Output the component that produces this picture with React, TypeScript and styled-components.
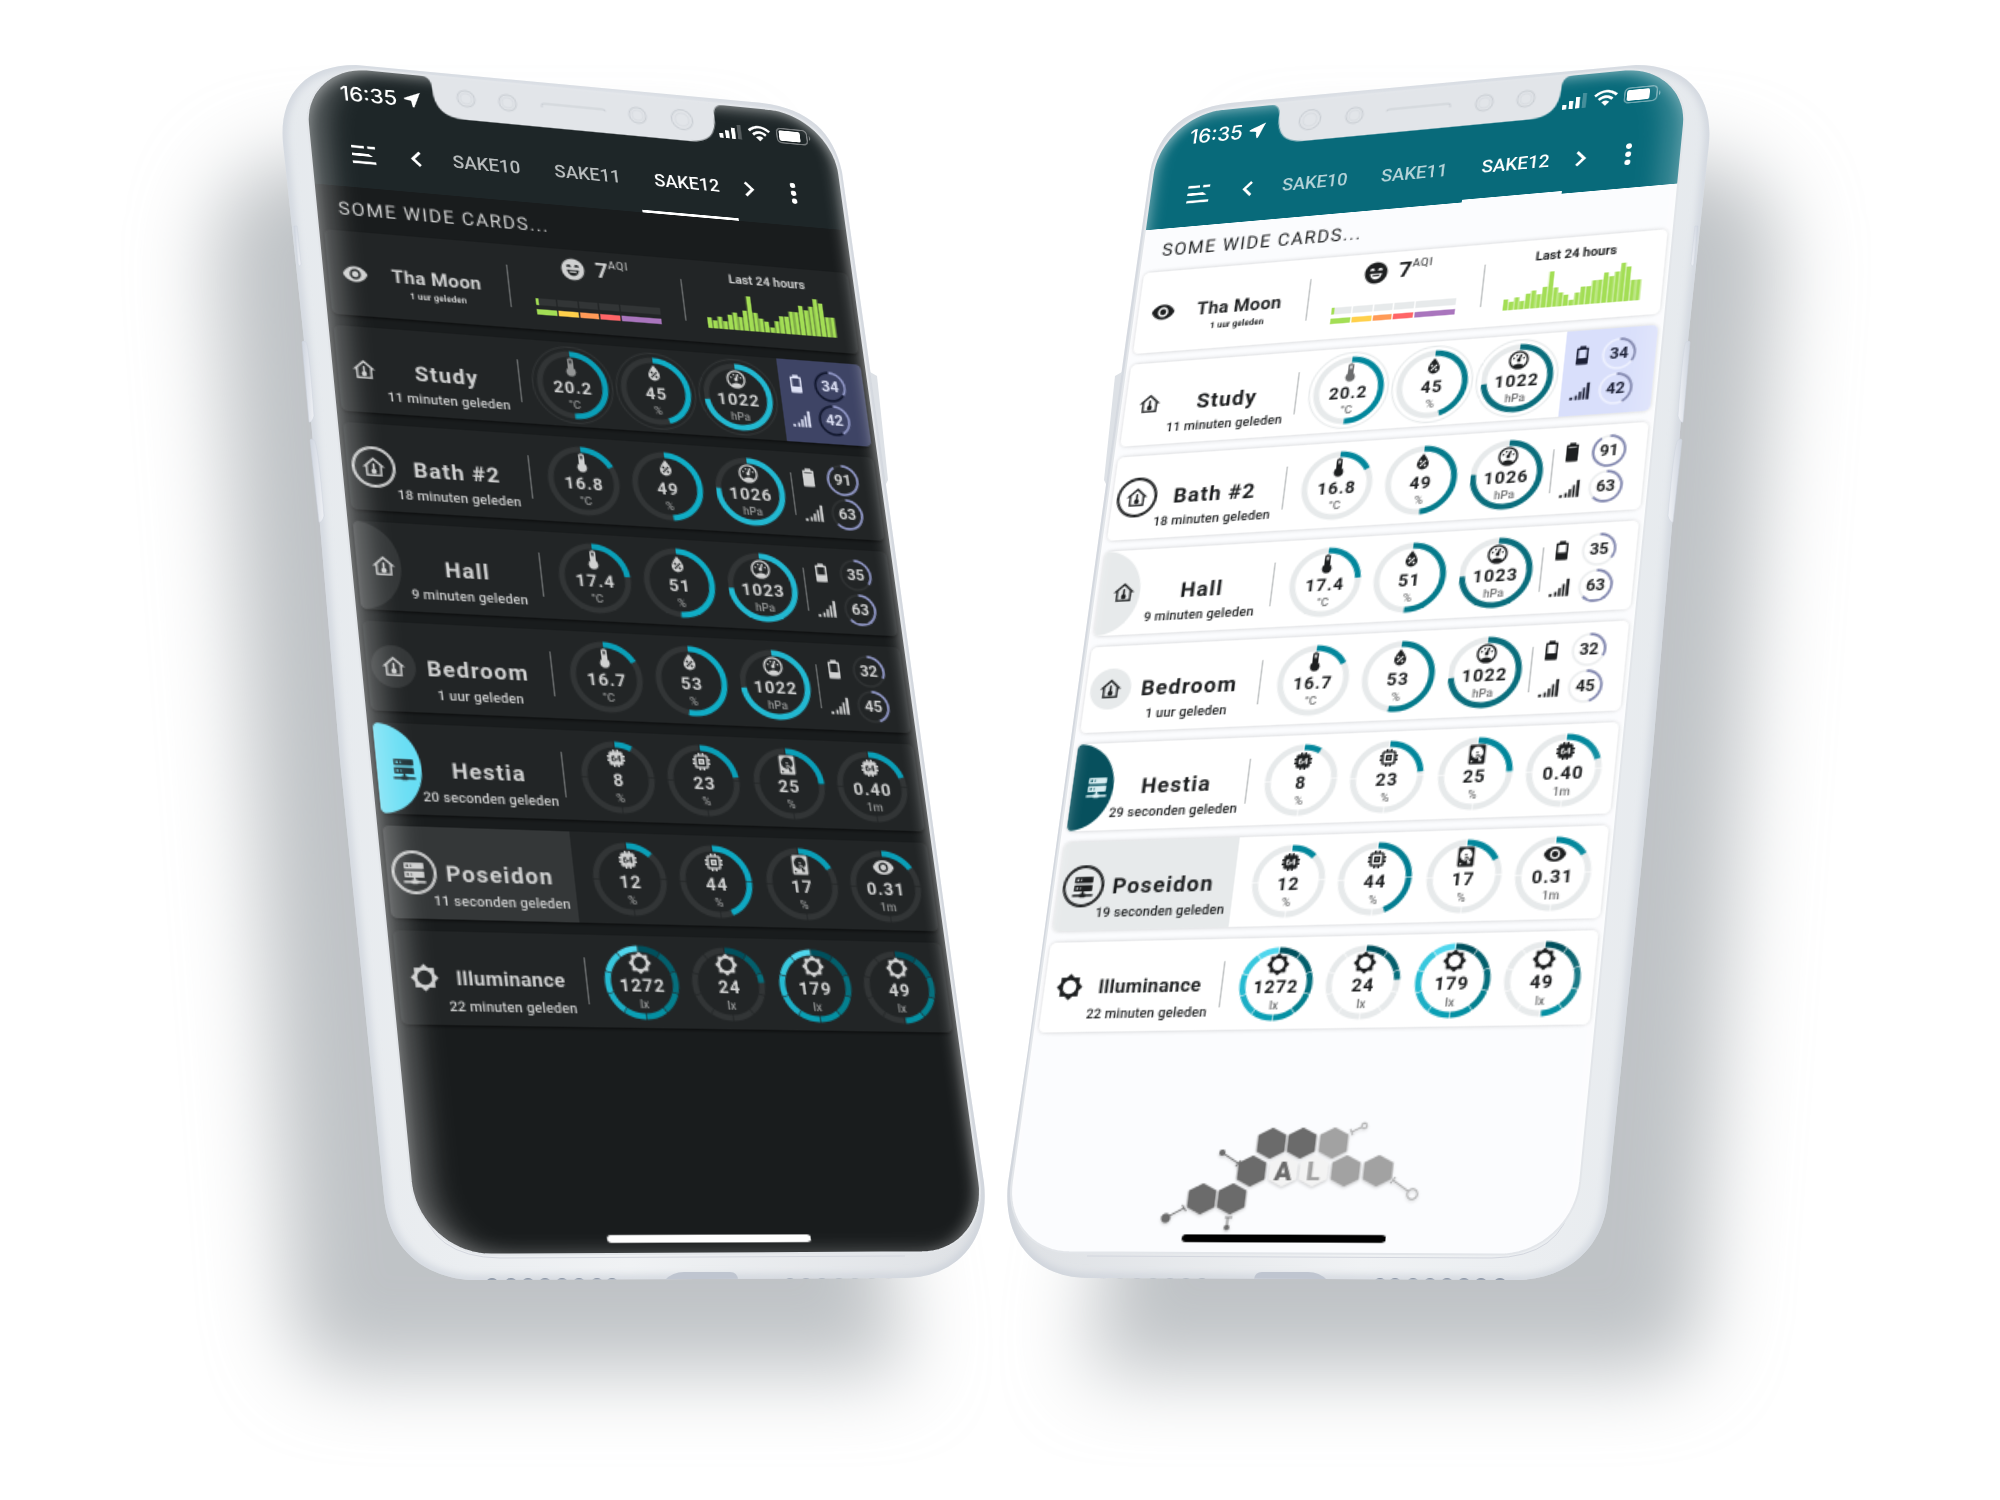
import React from 'react';
import styled, { createGlobalStyle, css, ThemeProvider } from 'styled-components';

/* ---------- themes ---------- */

interface SakeTheme {
  header: string;
  screen: string;
  card: string;
  cardShadow: string;
  text: string;
  tab: string;
  soft: string;
  divider: string;
  track: string;
  temperature: string;
  humidity: string;
  pressure: string;
  system: string;
  systemHigh: string;
  ringTrack: string;
  ringArc: string;
  asideBg: string;
  asideText: string;
  asideTrack: string;
  accent: string;
  accentIcon: string;
  homeBar: string;
  headerLine: string;
  glare: string;
}

declare module 'styled-components' {
  export interface DefaultTheme extends SakeTheme {}
}

const darkTheme: SakeTheme = {
  header: '#1e2628',
  screen: '#191c1d',
  card: '#222526',
  cardShadow: '0 1px 2px rgba(0, 0, 0, 0.6)',
  text: '#d0d1d1',
  tab: '#b9bdbe',
  soft: '#343738',
  divider: '#6a6d6e',
  track: '#323536',
  temperature: '#0a9fb8',
  humidity: '#10adc6',
  pressure: '#22b8d1',
  system: '#0a9fb8',
  systemHigh: '#0ea8c2',
  ringTrack: '#303334',
  ringArc: '#9097c6',
  asideBg: '#3e4465',
  asideText: '#dde1f5',
  asideTrack: '#10162c',
  accent: '#68def4',
  accentIcon: '#1f3338',
  homeBar: '#ffffff',
  headerLine: '#ffffff',
  glare:
    'inset 20px 0 18px -8px rgba(255, 255, 255, 0.3), inset -10px 0 10px -6px rgba(255, 255, 255, 0.3), inset 0 6px 10px -3px rgba(255, 255, 255, 0.4), inset 0 -4px 12px -2px rgba(255, 255, 255, 0.16)',
};

const lightTheme: SakeTheme = {
  header: '#086a7a',
  screen: '#fbfcfe',
  card: '#ffffff',
  cardShadow: '0 0 3px rgba(0, 0, 0, 0.2)',
  text: '#1d1f20',
  tab: '#b5d3d8',
  soft: '#e7eaeb',
  divider: '#bfc2c3',
  track: '#e7eaeb',
  temperature: '#02879c',
  humidity: '#057b8c',
  pressure: '#0a6e7d',
  system: '#02879c',
  systemHigh: '#037e92',
  ringTrack: '#eceeef',
  ringArc: '#8086ae',
  asideBg: '#d9dffb',
  asideText: '#1c2036',
  asideTrack: '#eef1ff',
  accent: '#07505d',
  accentIcon: '#d8eef2',
  homeBar: '#000000',
  headerLine: '#fbfcfe',
  glare:
    'inset -20px 0 18px -8px rgba(255, 255, 255, 0.24), inset 10px 0 10px -6px rgba(255, 255, 255, 0.28), inset 0 6px 10px -3px rgba(255, 255, 255, 0.4)',
};

/* ---------- geometry of the tilted screens ---------- */

type Point = [number, number];

const SCREEN_W = 375;
const SCREEN_H = 812;
const SCREEN_R = 46;
const SCENE_W = 996;
const SCENE_H = 1460;

/* Corners run clockwise from the top left one. */
const leftLeaning: Point[] = [
  [302, 63],
  [831, 115],
  [989, 1252],
  [418, 1255],
];

const rightLeaning: Point[] = [
  [165, 115],
  [694, 63],
  [577, 1255],
  [6, 1252],
];

/* Solves the projection of the flat screen onto the four given corners. */
const solve = ([p0, p1, p2, p3]: Point[]) => {
  const [x0, y0] = p0;
  const [x1, y1] = p1;
  const [x2, y2] = p2;
  const [x3, y3] = p3;
  const dx1 = x1 - x2;
  const dx2 = x3 - x2;
  const sx = x0 - x1 + x2 - x3;
  const dy1 = y1 - y2;
  const dy2 = y3 - y2;
  const sy = y0 - y1 + y2 - y3;
  const det = dx1 * dy2 - dx2 * dy1;
  const g = (sx * dy2 - dx2 * sy) / det;
  const h = (dx1 * sy - sx * dy1) / det;
  return {
    a: (x1 - x0 + g * x1) / SCREEN_W,
    d: (y1 - y0 + g * y1) / SCREEN_W,
    g: g / SCREEN_W,
    b: (x3 - x0 + h * x3) / SCREEN_H,
    e: (y3 - y0 + h * y3) / SCREEN_H,
    h: h / SCREEN_H,
    c: x0,
    f: y0,
  };
};

const project = (corners: Point[]): string => {
  const { a, b, c, d, e, f, g, h } = solve(corners);
  const m = [a, d, 0, g, b, e, 0, h, 0, 0, 1, 0, c, f, 0, 1];
  return `matrix3d(${m.map((n) => n.toFixed(9)).join(',')})`;
};

/* Outline of the glass, rounded corners included, after projection. */
const outline = (corners: Point[]): string => {
  const { a, b, c, d, e, f, g, h } = solve(corners);
  const centres: [number, number, number][] = [
    [SCREEN_R, SCREEN_R, 180],
    [SCREEN_W - SCREEN_R, SCREEN_R, 270],
    [SCREEN_W - SCREEN_R, SCREEN_H - SCREEN_R, 0],
    [SCREEN_R, SCREEN_H - SCREEN_R, 90],
  ];
  const points: string[] = [];
  centres.forEach(([cx, cy, from]) => {
    for (let s = 0; s <= 18; s += 1) {
      const t = ((from + s * 5) * Math.PI) / 180;
      const x = cx + SCREEN_R * Math.cos(t);
      const y = cy + SCREEN_R * Math.sin(t);
      const w = g * x + h * y + 1;
      points.push(`${((a * x + b * y + c) / w).toFixed(2)} ${((d * x + e * y + f) / w).toFixed(2)}`);
    }
  });
  return `M${points.join('L')}Z`;
};

/* ---------- icons ---------- */

const paths = {
  eye: 'M12 9a3 3 0 1 0 0 6 3 3 0 0 0 0-6m0 8a5 5 0 1 1 0-10 5 5 0 0 1 0 10m0-12.500C7 4.500 2.730 7.610 1 12c1.730 4.390 6 7.500 11 7.500s9.270-3.110 11-7.500c-1.730-4.390-6-7.500-11-7.500Z',
  thermometer: 'M15 13V5A3 3 0 0 0 9 5V13A5 5 0 1 0 15 13M12 4A1 1 0 0 1 13 5V8H11V5A1 1 0 0 1 12 4Z',
  water:
    'M12,3.25C12,3.25 6,10 6,14C6,17.32 8.69,20 12,20A6,6 0 0,0 18,14C18,10 12,3.25 12,3.25M14.47,9.97L15.53,11.03L9.53,17.03L8.47,15.97M9.75,10A1.25,1.25 0 0,1 11,11.25A1.25,1.25 0 0,1 9.75,12.5A1.25,1.25 0 0,1 8.5,11.25A1.25,1.25 0 0,1 9.75,10M14.25,14.5A1.25,1.25 0 0,1 15.5,15.75A1.25,1.25 0 0,1 14.25,17A1.25,1.25 0 0,1 13,15.75A1.25,1.25 0 0,1 14.25,14.5Z',
  gauge:
    'M12,2A10,10 0 0,0 2,12A10,10 0 0,0 12,22A10,10 0 0,0 22,12A10,10 0 0,0 12,2M12,4A8,8 0 0,1 20,12C20,14.4 19,16.5 17.3,18C15.9,16.7 14,16 12,16C10,16 8.2,16.7 6.7,18C5,16.5 4,14.4 4,12A8,8 0 0,1 12,4M14,5.89C13.62,5.9 13.26,6.15 13.1,6.54L11.81,9.77L11.71,10C11,10.13 10.41,10.6 10.14,11.26C9.73,12.29 10.23,13.45 11.26,13.86C12.29,14.27 13.45,13.77 13.86,12.74C14.12,12.08 14,11.32 13.57,10.76L13.67,10.5L14.96,7.29L14.97,7.26C15.17,6.75 14.92,6.17 14.41,5.96C14.28,5.91 14.15,5.89 14,5.89M10,6A1,1 0 0,0 9,7A1,1 0 0,0 10,8A1,1 0 0,0 11,7A1,1 0 0,0 10,6M7,9A1,1 0 0,0 6,10A1,1 0 0,0 7,11A1,1 0 0,0 8,10A1,1 0 0,0 7,9M17,9A1,1 0 0,0 16,10A1,1 0 0,0 17,11A1,1 0 0,0 18,10A1,1 0 0,0 17,9Z',
  home:
    'M12 2.500L1.500 12H4.500V21H19.500V12H22.500L12 2.500M12 5.200L17.700 10.300V19.200H6.300V10.300L12 5.200M11 9.500V14A2.500 2.500 0 1 0 13 14V9.500A1 1 0 0 0 11 9.500Z',
  server:
    'M13,19H14A1,1 0 0,1 15,20H22V22H15A1,1 0 0,1 14,23H10A1,1 0 0,1 9,22H2V20H9A1,1 0 0,1 10,19H11V17H4A1,1 0 0,1 3,16V12A1,1 0 0,1 4,11H20A1,1 0 0,1 21,12V16A1,1 0 0,1 20,17H13V19M4,3H20A1,1 0 0,1 21,4V8A1,1 0 0,1 20,9H4A1,1 0 0,1 3,8V4A1,1 0 0,1 4,3M9,7H10V5H9V7M9,15H10V13H9V15M5,5V7H7V5H5M5,13V15H7V13H5Z',
  chip:
    'M9,3V5H7A2,2 0 0,0 5,7V9H3V11H5V13H3V15H5V17A2,2 0 0,0 7,19H9V21H11V19H13V21H15V19H17A2,2 0 0,0 19,17V15H21V13H19V11H21V9H19V7A2,2 0 0,0 17,5H15V3H13V5H11V3Z',
  memory:
    'M17,17H7V7H17M21,11V9H19V7C19,5.89 18.1,5 17,5H15V3H13V5H11V3H9V5H7C5.89,5 5,5.89 5,7V9H3V11H5V13H3V15H5V17A2,2 0 0,0 7,19H9V21H11V19H13V21H15V19H17A2,2 0 0,0 19,17V15H21V13H19V11M13,13H11V11H13M15,9H9V15H15V9Z',
  disk:
    'M6,2H18A2,2 0 0,1 20,4V20A2,2 0 0,1 18,22H6A2,2 0 0,1 4,20V4A2,2 0 0,1 6,2M12,4A6,6 0 0,0 6,10C6,13.31 8.69,16 12.1,16L11.22,13.77C10.95,13.29 11.11,12.68 11.59,12.4L12.45,11.9C12.93,11.63 13.54,11.79 13.82,12.27L15.74,14.69C17.12,13.59 18,11.9 18,10A6,6 0 0,0 12,4M12,9A1,1 0 0,1 13,10A1,1 0 0,1 12,11A1,1 0 0,1 11,10A1,1 0 0,1 12,9M7,18A1,1 0 0,0 6,19A1,1 0 0,0 7,20A1,1 0 0,0 8,19A1,1 0 0,0 7,18M12.09,13.27L14.58,19.58L17.17,18.08L12.95,12.77L12.09,13.27Z',
  brightness:
    'M12,18A6,6 0 0,1 6,12A6,6 0 0,1 12,6A6,6 0 0,1 18,12A6,6 0 0,1 12,18M20,15.31L23.31,12L20,8.69V4H15.31L12,0.69L8.69,4H4V8.69L0.69,12L4,15.31V20H8.69L12,23.31L15.31,20H20V15.31Z',
  smile:
    'M12,2A10,10 0 0,0 2,12A10,10 0 0,0 12,22A10,10 0 0,0 22,12A10,10 0 0,0 12,2M8.5,7.500C9.600,7.500 10.500,8.400 10.700,9.800H6.300C6.500,8.400 7.400,7.500 8.500,7.500M15.500,7.500C16.600,7.500 17.500,8.400 17.700,9.800H13.300C13.500,8.400 14.400,7.500 15.500,7.500M12,18C9.300,18 7.200,16 6.800,12.500H17.200C16.800,16 14.700,18 12,18M8.800,13.600L9.300,15H14.700L15.200,13.600H8.800Z',
  arrow: 'M22.500 1.500 1.500 10.500v2l8.700 1.400 1.400 8.600h2L22.500 1.500Z',
};

type IconName = keyof typeof paths;

const IconSvg = styled.svg<{ $size: number; $faded?: boolean }>`
  display: block;
  flex: none;
  width: ${(p) => p.$size}px;
  height: ${(p) => p.$size}px;
  fill: currentColor;
  opacity: ${(p) => (p.$faded ? 0.65 : 1)};
`;

const ChipText = styled.text`
  font: 700 9px Roboto, 'Liberation Sans', sans-serif;
  fill: ${(p) => p.theme.card};
`;

const Icon = ({ name, size, faded }: { name: IconName; size: number; faded?: boolean }) => (
  <IconSvg viewBox="0 0 24 24" $size={size} $faded={faded} aria-hidden="true">
    <path fillRule="evenodd" d={paths[name]} />
    {name === 'chip' && <ChipText x="12" y="15.300" textAnchor="middle">64</ChipText>}
  </IconSvg>
);

const Battery = ({ level }: { level: number }) => (
  <IconSvg viewBox="0 0 24 24" $size={16} aria-hidden="true">
    <path
      fillRule="evenodd"
      d={`M16.670 4H15V2H9V4H7.330A1.330 1.330 0 0 0 6 5.330V20.670C6 21.400 6.600 22 7.330 22H16.670A1.330 1.330 0 0 0 18 20.670V5.330C18 4.600 17.400 4 16.670 4ZM8 6H16V${
        6 + Math.round((1 - level / 100) * 13)
      }H8Z`}
    />
  </IconSvg>
);

const SignalBars = () => (
  <IconSvg viewBox="0 0 24 24" $size={15} aria-hidden="true">
    <path d="M2 19h3v3H2zM7.500 17h2.500v5H7.500zM11.500 13h2.500v9h-2.500zM15.500 8.500H18V22h-2.500zM19.500 3h3v19h-3z" />
  </IconSvg>
);

/* ---------- page ---------- */

const GlobalStyle = createGlobalStyle`
  *, *::before, *::after { box-sizing: border-box; }
  body {
    margin: 0;
    background: #ffffff;
    font-family: Roboto, 'Liberation Sans', sans-serif;
  }
`;

const Stage = styled.main`
  display: flex;
  justify-content: center;
  min-height: 100vh;
  padding-right: 8px;
  overflow: hidden;
`;

const Scene = styled.section`
  position: relative;
  flex: none;
  width: ${SCENE_W}px;
  height: ${SCENE_H}px;
`;

const SceneSvg = styled.svg<{ $flip?: boolean }>`
  position: absolute;
  inset: 0;
  width: 100%;
  height: 100%;
  overflow: visible;
  pointer-events: none;
  ${(p) => p.$flip && css`transform: scaleX(-1);`}
`;

const Screen = styled.div<{ $corners: Point[] }>`
  position: absolute;
  top: 0;
  left: 0;
  display: flex;
  flex-direction: column;
  width: ${SCREEN_W}px;
  height: ${SCREEN_H}px;
  border-radius: ${SCREEN_R}px;
  overflow: hidden;
  transform-origin: 0 0;
  transform: ${(p) => project(p.$corners)};
  background: ${(p) => p.theme.screen};
  color: ${(p) => p.theme.text};
`;

const Glare = styled.div`
  position: absolute;
  inset: 0;
  border-radius: ${SCREEN_R}px;
  box-shadow: ${(p) => p.theme.glare};
  pointer-events: none;
`;

const NotchSvg = styled.svg`
  position: absolute;
  top: 0;
  left: 80px;
  width: 216px;
  height: 32px;
`;

/* ---------- header ---------- */

const TopBar = styled.header`
  height: 89px;
  background: ${(p) => p.theme.header};
  color: #ffffff;
`;

const StatusBar = styled.div`
  display: flex;
  align-items: center;
  justify-content: space-between;
  height: 39px;
  padding: 0 17px 0 24px;
`;

const StatusGroup = styled.div`
  display: flex;
  align-items: center;
  gap: 4px;
`;

const Clock = styled.time`
  font: 500 15px/18px Inter, 'Liberation Sans', sans-serif;
`;

const StatusSvg = styled.svg<{ $w: number }>`
  display: block;
  width: ${(p) => p.$w}px;
  height: 12px;
`;

const Nav = styled.nav`
  display: flex;
  align-items: center;
  height: 50px;
  padding: 0 22px 0 20px;
`;

const BarButton = styled.button<{ $w: number }>`
  display: flex;
  align-items: center;
  justify-content: center;
  width: ${(p) => p.$w}px;
  height: 50px;
  padding: 0;
  border: 0;
  background: none;
  color: inherit;
`;

const Tab = styled.a<{ $active?: boolean }>`
  display: flex;
  flex: 1;
  align-items: center;
  justify-content: center;
  height: 50px;
  margin: 0 1px;
  padding-top: 1px;
  border-bottom: 2px solid ${(p) => (p.$active ? p.theme.headerLine : 'transparent')};
  color: ${(p) => (p.$active ? '#ffffff' : p.theme.tab)};
  font-size: 13px;
  font-weight: 500;
  text-decoration: none;
`;

const Spacer = styled.span`
  width: 10px;
`;

const Heading = styled.h2`
  margin: 0;
  padding-left: 15px;
  font-size: 13px;
  font-weight: 400;
  letter-spacing: 0.085em;
  line-height: 33px;
`;

/* ---------- cards ---------- */

const CardList = styled.div`
  display: flex;
  flex-direction: column;
  gap: 8px;
  padding: 0 4px;
`;

const Card = styled.article`
  position: relative;
  display: flex;
  align-items: center;
  height: 61px;
  border-radius: 4px;
  background: ${(p) => p.theme.card};
  box-shadow: ${(p) => p.theme.cardShadow};
`;

type Badge = 'none' | 'outline' | 'disc' | 'half' | 'accent';

const Info = styled.div<{ $filled?: boolean }>`
  position: relative;
  display: flex;
  align-items: center;
  width: 122px;
  height: 61px;
  border-radius: 4px 0 0 4px;
  overflow: hidden;
  background: ${(p) => (p.$filled ? p.theme.soft : 'none')};
`;

const HalfDisc = styled.span<{ $accent: boolean }>`
  position: absolute;
  top: 0;
  left: 0;
  width: 29px;
  height: 61px;
  border-radius: 0 29px 29px 0 / 0 31px 31px 0;
  background: ${(p) => (p.$accent ? p.theme.accent : p.theme.soft)};
`;

const IconSlot = styled.span`
  position: relative;
  display: flex;
  flex: none;
  justify-content: center;
  width: 35px;
`;

const IconBadge = styled.span<{ $kind: Badge }>`
  display: flex;
  flex: none;
  align-items: center;
  justify-content: center;
  width: 29px;
  height: 29px;
  border-radius: 50%;
  ${(p) => p.$kind === 'outline' && css`border: 1px solid currentColor; box-shadow: inset 0 0 0 1px currentColor;`}
  ${(p) => p.$kind === 'disc' && css`background: ${p.theme.soft};`}
  ${(p) => p.$kind === 'accent' && css`color: ${p.theme.accentIcon};`}
`;

const Names = styled.div`
  position: relative;
  display: flex;
  flex-direction: column;
  align-items: center;
  align-self: flex-start;
  width: 76px;
  padding-top: 22px;
  white-space: nowrap;
`;

const Title = styled.h3<{ $small?: boolean }>`
  margin: 0;
  font-size: ${(p) => (p.$small ? 13 : 15)}px;
  font-weight: 700;
  letter-spacing: ${(p) => (p.$small ? 0.02 : 0.06)}em;
  line-height: 18px;
`;

const Age = styled.p<{ $small?: boolean }>`
  margin: 0;
  font-size: ${(p) => (p.$small ? 6 : 9)}px;
  font-weight: ${(p) => (p.$small ? 700 : 500)};
  letter-spacing: 0.02em;
  line-height: ${(p) => (p.$small ? 8 : 19)}px;
`;

const Divider = styled.span<{ $hidden?: boolean }>`
  flex: none;
  width: 1px;
  height: 31px;
  background: ${(p) => (p.$hidden ? 'transparent' : p.theme.divider)};
`;

const Gauges = styled.div<{ $count: number }>`
  display: grid;
  flex: 1;
  grid-template-columns: repeat(${(p) => p.$count}, 1fr);
  justify-items: center;
  padding: 0 ${(p) => (p.$count === 4 ? 4 : 1)}px 0 7px;
`;

const GaugeBox = styled.div`
  position: relative;
  display: flex;
  flex-direction: column;
  align-items: center;
  width: 50px;
  height: 50px;
  padding-top: 4px;
`;

const GaugeSvg = styled.svg`
  position: absolute;
  inset: 0;
  overflow: visible;
`;

const Value = styled.strong`
  font-size: 12px;
  font-weight: 700;
  letter-spacing: 0.06em;
  line-height: 15px;
`;

const Unit = styled.span`
  font-size: 8px;
  font-weight: 500;
  line-height: 9px;
  opacity: 0.65;
`;

type GaugeKind = 'temperature' | 'humidity' | 'pressure' | 'system' | 'systemHigh' | 'light';

interface GaugeData {
  icon: IconName;
  value: string;
  unit: string;
  part: number;
  kind: GaugeKind;
}

const lightScale = [
  '#00505d', '#035f6c', '#066f7d', '#04808f', '#0490a3',
  '#0a9fb4', '#1caec5', '#25bad1', '#38c8de', '#50d7ee',
];

const arc = (from: number, to: number, r: number, c: number) => {
  const at = (t: number) => {
    const a = t * Math.PI * 2 - Math.PI / 2;
    return `${(c + r * Math.cos(a)).toFixed(3)} ${(c + r * Math.sin(a)).toFixed(3)}`;
  };
  return `M${at(from)}A${r} ${r} 0 ${to - from > 0.5 ? 1 : 0} 1 ${at(to)}`;
};

const Arc = styled.path<{ $kind: GaugeKind | 'track' }>`
  fill: none;
  stroke: ${(p) => (p.$kind === 'light' ? 'currentColor' : p.theme[p.$kind])};
  stroke-width: 4;
`;

const Halo = styled.circle`
  fill: none;
  stroke: ${(p) => p.theme.track};
  stroke-width: 1;
`;

const Gauge = ({ data, halo, faded }: { data: GaugeData; halo?: boolean; faded?: boolean }) => {
  const segments = data.kind === 'light' ? 10 : data.kind.startsWith('system') ? 4 : 1;
  const gap = segments > 1 ? 0.004 : 0;
  const list = Array.from({ length: segments }, (_, i) => i);
  return (
    <GaugeBox>
      <GaugeSvg viewBox="0 0 50 50" aria-hidden="true">
        {halo && <Halo cx="25" cy="25" r="27.500" />}
        {list.map((i) => {
          const start = i / segments;
          const end = Math.min((i + 1) / segments, 0.9999) - gap;
          const filled = Math.min(end, data.part);
          return (
            <g key={i}>
              <Arc $kind="track" d={arc(start, end, 22.5, 25)} />
              {filled > start && (
                <g color={lightScale[i]}>
                  <Arc $kind={data.kind} d={arc(start, filled, 22.5, 25)} />
                </g>
              )}
            </g>
          );
        })}
      </GaugeSvg>
      <Icon name={data.icon} size={16} faded={faded} />
      <Value>{data.value}</Value>
      <Unit>{data.unit}</Unit>
    </GaugeBox>
  );
};

const Aside = styled.div<{ $filled?: boolean }>`
  display: grid;
  flex: none;
  grid-template-columns: 24px 25px;
  align-content: center;
  row-gap: 2px;
  width: 61px;
  height: 61px;
  border-radius: 0 4px 4px 0;
  ${(p) => p.$filled && css`background: ${p.theme.asideBg}; color: ${p.theme.asideText};`}
`;

const AsideIcon = styled.span`
  display: flex;
  align-items: center;
  justify-content: center;
`;

const RingBox = styled.div`
  position: relative;
  display: flex;
  align-items: center;
  justify-content: center;
  width: 23px;
  height: 23px;
  justify-self: center;
  font-size: 11px;
  font-weight: 700;
`;

const RingSvg = styled.svg`
  position: absolute;
  inset: 0;
`;

const RingTrack = styled.circle<{ $strong?: boolean }>`
  fill: none;
  stroke: ${(p) => (p.$strong ? p.theme.asideTrack : p.theme.ringTrack)};
  stroke-width: 1.5;
`;

const RingArc = styled.path`
  fill: none;
  stroke: ${(p) => p.theme.ringArc};
  stroke-width: 1.7;
`;

const Ring = ({ value, strong }: { value: number; strong?: boolean }) => (
  <RingBox>
    <RingSvg viewBox="0 0 23 23" aria-hidden="true">
      <RingTrack cx="11.500" cy="11.500" r="10.500" $strong={strong} />
      <RingArc d={arc(0, value / 100, 10.5, 11.5)} />
    </RingSvg>
    {value}
  </RingBox>
);

interface Row {
  title: string;
  age: string;
  icon: IconName;
  badge: Badge;
  gauges: GaugeData[];
  battery?: number;
  signal?: number;
  filled?: boolean;
  highlight?: boolean;
}

const climate = (t: string, tp: number, h: number, p: string, pp: number): GaugeData[] => [
  { icon: 'thermometer', value: t, unit: '°C', part: tp, kind: 'temperature' },
  { icon: 'water', value: String(h), unit: '%', part: h / 100, kind: 'humidity' },
  { icon: 'gauge', value: p, unit: 'hPa', part: pp, kind: 'pressure' },
];

const makeRows = (hestiaAge: string, poseidonAge: string): Row[] => [
  { title: 'Study', age: '11 minuten geleden', icon: 'home', badge: 'none', gauges: climate('20.2', 0.505, 45, '1022', 0.73), battery: 34, signal: 42, highlight: true },
  { title: 'Bath #2', age: '18 minuten geleden', icon: 'home', badge: 'outline', gauges: climate('16.8', 0.17, 49, '1026', 0.76), battery: 91, signal: 63 },
  { title: 'Hall', age: '9 minuten geleden', icon: 'home', badge: 'half', gauges: climate('17.4', 0.235, 51, '1023', 0.74), battery: 35, signal: 63 },
  { title: 'Bedroom', age: '1 uur geleden', icon: 'home', badge: 'disc', gauges: climate('16.7', 0.168, 53, '1022', 0.73), battery: 32, signal: 45 },
  {
    title: 'Hestia', age: hestiaAge, icon: 'server', badge: 'accent',
    gauges: [
      { icon: 'chip', value: '8', unit: '%', part: 0.08, kind: 'system' },
      { icon: 'memory', value: '23', unit: '%', part: 0.23, kind: 'system' },
      { icon: 'disk', value: '25', unit: '%', part: 0.25, kind: 'system' },
      { icon: 'chip', value: '0.40', unit: '1m', part: 0.2, kind: 'system' },
    ],
  },
  {
    title: 'Poseidon', age: poseidonAge, icon: 'server', badge: 'outline', filled: true,
    gauges: [
      { icon: 'chip', value: '12', unit: '%', part: 0.12, kind: 'system' },
      { icon: 'memory', value: '44', unit: '%', part: 0.44, kind: 'systemHigh' },
      { icon: 'disk', value: '17', unit: '%', part: 0.17, kind: 'system' },
      { icon: 'eye', value: '0.31', unit: '1m', part: 0.155, kind: 'system' },
    ],
  },
  {
    title: 'Illuminance', age: '22 minuten geleden', icon: 'brightness', badge: 'none',
    gauges: [
      { icon: 'brightness', value: '1272', unit: 'lx', part: 1, kind: 'light' },
      { icon: 'brightness', value: '24', unit: 'lx', part: 0.24, kind: 'light' },
      { icon: 'brightness', value: '179', unit: 'lx', part: 1, kind: 'light' },
      { icon: 'brightness', value: '49', unit: 'lx', part: 0.49, kind: 'light' },
    ],
  },
];

const EntityCard = ({ row }: { row: Row }) => (
  <Card>
    <Info $filled={row.filled}>
      {(row.badge === 'half' || row.badge === 'accent') && <HalfDisc $accent={row.badge === 'accent'} />}
      <IconSlot>
        <IconBadge $kind={row.badge}>
          <Icon name={row.icon} size={row.icon === 'brightness' ? 19 : 17} />
        </IconBadge>
      </IconSlot>
      <Names>
        <Title $small={row.icon === 'brightness'}>{row.title}</Title>
        <Age>{row.age}</Age>
      </Names>
    </Info>
    <Divider $hidden={row.filled} />
    <Gauges $count={row.gauges.length}>
      {row.gauges.map((g, i) => (
        <Gauge key={i} data={g} halo={row.highlight} faded={row.highlight && i === 0} />
      ))}
    </Gauges>
    {row.battery !== undefined && row.signal !== undefined && (
      <>
        <Divider $hidden={row.highlight} />
        <Aside $filled={row.highlight}>
          <AsideIcon><Battery level={row.battery} /></AsideIcon>
          <Ring value={row.battery} strong={row.highlight} />
          <AsideIcon><SignalBars /></AsideIcon>
          <Ring value={row.signal} strong={row.highlight} />
        </Aside>
      </>
    )}
  </Card>
);

/* ---------- air quality card ---------- */

const AirBlock = styled.div`
  display: flex;
  flex-direction: column;
  align-items: center;
  align-self: flex-start;
  width: 121px;
  padding-top: 4px;
`;

const AirHead = styled.div`
  display: flex;
  align-items: center;
  gap: 6px;
  height: 20px;
  margin-bottom: 14px;
`;

const AirValue = styled.strong`
  display: flex;
  align-items: flex-start;
  font-size: 16px;
  font-weight: 700;
  line-height: 22px;
`;

const AirUnit = styled.sup`
  font-size: 8px;
  font-weight: 400;
  line-height: 14px;
  letter-spacing: 0.06em;
`;

const AirBar = styled.div<{ $thick?: boolean }>`
  display: grid;
  grid-template-columns: 1fr 1fr 1fr 1fr 2fr;
  gap: 1px;
  width: 87px;
  height: ${(p) => (p.$thick ? 5 : 4)}px;
  margin-bottom: 3px;
`;

const AirSegment = styled.span<{ $color?: string; $start?: boolean }>`
  background: ${(p) => p.$color ?? p.theme.track};
  ${(p) => p.$start && css`border-left: 2px solid #a3de55;`}
`;

const HistoryBlock = styled.div`
  display: flex;
  flex: 1;
  flex-direction: column;
  align-items: center;
  align-self: flex-start;
  padding: 6px 0 0 1px;
  font-size: 9px;
  font-weight: 700;
  line-height: 12px;
`;

const Chart = styled.svg`
  display: block;
  width: 93px;
  height: 28px;
  margin-top: 4px;
  fill: #a3de55;
`;

const history = [8, 6, 9, 6, 11, 13, 10, 15, 26, 14, 10, 8, 4, 9, 13, 13, 17, 17, 22, 19, 22, 28, 25, 15, 15];
const airColors = ['#a3de55', '#ffd04b', '#ff9a57', '#ff6567', '#a975bd'];

const MoonCard = () => (
  <Card>
    <Info>
      <IconSlot>
        <Icon name="eye" size={18} />
      </IconSlot>
      <Names>
        <Title $small>Tha Moon</Title>
        <Age $small>1 uur geleden</Age>
      </Names>
    </Info>
    <Divider />
    <AirBlock>
      <AirHead>
        <Icon name="smile" size={19} />
        <AirValue>7<AirUnit>AQI</AirUnit></AirValue>
      </AirHead>
      <AirBar $thick>
        {airColors.map((c, i) => <AirSegment key={c} $start={i === 0} />)}
      </AirBar>
      <AirBar>
        {airColors.map((c) => <AirSegment key={c} $color={c} />)}
      </AirBar>
    </AirBlock>
    <Divider />
    <HistoryBlock>
      Last 24 hours
      <Chart viewBox="0 0 100 28" preserveAspectRatio="none" aria-hidden="true">
        {history.map((h, i) => <rect key={i} x={i * 4} y={28 - h} width="3.450" height={h} />)}
      </Chart>
    </HistoryBlock>
  </Card>
);

/* ---------- logo ---------- */

const LogoSvg = styled.svg`
  display: block;
  width: 180px;
  height: 84px;
  margin: 50px 0 0 100px;
  overflow: visible;
  filter: drop-shadow(0 1px 1px rgba(0, 0, 0, 0.2));
`;

const LogoLetter = styled.text`
  font: 900 17px Roboto, 'Liberation Sans', sans-serif;
  text-anchor: middle;
`;

const hexes: [number, number, string][] = [
  [73, 25, '#6b6b6b'], [93, 25, '#6b6b6b'], [114, 25, '#a2a2a2'],
  [62, 43, '#6b6b6b'], [83, 43, '#f3f3f3'], [103, 43, '#f3f3f3'], [124, 43, '#a2a2a2'], [145, 43, '#a2a2a2'],
  [31, 61, '#6b6b6b'], [51, 61, '#6b6b6b'],
];

const Logo = () => (
  <LogoSvg viewBox="0 0 180 84" role="img" aria-label="AL">
    {hexes.map(([x, y, c]) => (
      <path
        key={`${x}-${y}`}
        d={`M${x} ${y - 9.5}L${x + 8.8} ${y - 5}V${y + 5}L${x} ${y + 9.5}L${x - 8.8} ${y + 5}V${y - 5}Z`}
        fill={c}
        stroke={c}
        strokeLinejoin="round"
      />
    ))}
    <LogoLetter x="83" y="49" fill="#6b6b6b">A</LogoLetter>
    <LogoLetter x="103" y="49" fill="#a2a2a2">L</LogoLetter>
    <g stroke="#6b6b6b" fill="#6b6b6b">
      <path d="M51 40l3-4M52.500 38L41 31M18.500 65l3 4M20 67L9 73M48 73h5M50 73v6" fill="none" strokeWidth="0.800" />
      <circle cx="41" cy="31" r="1.500" />
      <circle cx="8.500" cy="73.500" r="2.600" />
      <circle cx="50" cy="79.500" r="1.300" />
    </g>
    <g stroke="#a2a2a2" fill="none" strokeWidth="0.800">
      <path d="M124 16l2 4M125 18l6-3M154 51l3-4M155.500 49L166 56" />
      <circle cx="133" cy="14" r="1.800" />
      <circle cx="169" cy="58" r="3.300" />
    </g>
  </LogoSvg>
);

const HomeBar = styled.span`
  width: 134px;
  height: 5px;
  margin: auto auto 7px;
  border-radius: 3px;
  background: ${(p) => p.theme.homeBar};
`;

/* ---------- device ---------- */

const speakerHoles = [492, 511, 528, 545, 562, 579, 597, 612, 790, 806, 822, 839, 855, 872, 889, 905];

const bodyPath =
  'M283 143C279 98 302 65 356 65L752 102C806 106 833 130 842 172L866 340L964 1050L984 1183C990 1240 958 1277 905 1278L472 1280C424 1278 388 1248 384 1197L340 760L305 350Z';

const Device = ({ id, flip }: { id: string; flip: boolean }) => (
  <SceneSvg viewBox={`0 0 ${SCENE_W} ${SCENE_H}`} $flip={flip} aria-hidden="true">
    <defs>
      <linearGradient id={`${id}-body`} x1="0" y1="0" x2="1" y2="0">
        <stop offset="0" stopColor="#e5e9ed" />
        <stop offset="0.5" stopColor="#f0f2f4" />
        <stop offset="1" stopColor="#dde0e4" />
      </linearGradient>
      <linearGradient id={`${id}-button`} x1="0" y1="0" x2="1" y2="0">
        <stop offset="0" stopColor="#cfd5df" />
        <stop offset="1" stopColor="#eff1f5" />
      </linearGradient>
      <filter id={`${id}-shade`} x="-40%" y="-40%" width="180%" height="180%">
        <feGaussianBlur stdDeviation="40" />
      </filter>
      <filter id={`${id}-soft`} x="-10%" y="-10%" width="120%" height="120%">
        <feGaussianBlur stdDeviation="4" />
      </filter>
      <clipPath id={`${id}-clip`}>
        <path d={bodyPath} />
      </clipPath>
    </defs>
    <path
      d="M300 160H720L905 1372H345Q300 1370 292 1320L214 260Q214 165 300 160Z"
      fill="#bfc3c6"
      filter={`url(#${id}-shade)`}
    />
    <path d="M870 372l7 4 11 104-4 8z" fill="#dde1e6" />
    <g clipPath={`url(#${id}-clip)`}>
      <rect x="260" y="40" width="740" height="1260" fill={`url(#${id}-body)`} />
      <path d={bodyPath} fill="none" stroke="#c6ccd6" strokeWidth="6" filter={`url(#${id}-soft)`} />
      {speakerHoles.map((x) => (
        <ellipse key={x} cx={x} cy="1281" rx="5" ry="3" fill="#8d97a6" />
      ))}
      <path d="M664 1281Q672 1272 684 1272H730Q738 1272 738 1281Z" fill="#bfc5d0" />
      <path d="M420 1200Q430 1257 500 1258L905 1256" fill="none" stroke="#d3d6de" strokeWidth="1" />
    </g>
    <path d="M294 226l3 0 4 38q-1 4-3 0z" fill={`url(#${id}-button)`} stroke="#ccd2dc" strokeWidth="0.500" />
    <path d="M302 342q1-2 4 0 3 3 8 74-2 7-5 6z" fill={`url(#${id}-button)`} stroke="#ccd2dc" strokeWidth="0.500" />
    <path d="M310 440q1-2 4 0 4 3 10 76-2 7-5 6z" fill={`url(#${id}-button)`} stroke="#ccd2dc" strokeWidth="0.500" />
  </SceneSvg>
);

/* Thin rim where the glass meets the body. */
const Rim = ({ corners }: { corners: Point[] }) => (
  <SceneSvg viewBox={`0 0 ${SCENE_W} ${SCENE_H}`} aria-hidden="true">
    <path d={outline(corners)} fill="none" stroke="#e3e6ea" strokeWidth="2" />
  </SceneSvg>
);

const Notch = ({ flip }: { flip: boolean }) => (
  <NotchSvg viewBox="0 0 216 32" aria-hidden="true">
    <path
      d="M0 0H216V0Q208 1 208 9V10Q208 31 188 31H28Q8 31 8 10V9Q8 1 0 0Z"
      fill="#e2e5e9"
    />
    <g fill="none" stroke="#c2c7cd" strokeWidth="0.700" transform={flip ? 'matrix(-1 0 0 1 215 0)' : undefined}>
      <circle cx="31" cy="15" r="6" />
      <circle cx="60" cy="15" r="6" />
      <circle cx="152" cy="15" r="6" />
      <circle cx="184" cy="15" r="7.500" />
      <circle cx="31" cy="15" r="4" stroke="#d6dadf" />
      <circle cx="60" cy="15" r="4" stroke="#d6dadf" />
      <circle cx="152" cy="15" r="4" stroke="#d6dadf" />
      <circle cx="184" cy="15" r="5" stroke="#d6dadf" />
      <path d="M84 16V14.500Q84 13 86 13H127Q129 13 129 14.500" />
    </g>
  </NotchSvg>
);

interface PhoneProps {
  id: string;
  theme: SakeTheme;
  corners: Point[];
  flip: boolean;
  rows: Row[];
  logo?: boolean;
}

const Phone = ({ id, theme, corners, flip, rows, logo }: PhoneProps) => (
  <ThemeProvider theme={theme}>
    <Scene>
      <Device id={id} flip={flip} />
      <Screen $corners={corners}>
        <TopBar>
          <StatusBar>
            <StatusGroup>
              <Clock>16:35</Clock>
              <Icon name="arrow" size={13} />
            </StatusGroup>
            <StatusGroup>
              <StatusSvg viewBox="0 0 17 12" $w={17} aria-hidden="true">
                <path d="M0 8.500h2.800V12H0zM4.500 6h2.800v6H4.500zM9 3.500h2.800V12H9z" fill="#fff" />
                <path d="M13.500 1h2.800v11h-2.800z" fill="#fff" opacity="0.250" />
              </StatusSvg>
              <StatusSvg viewBox="0 0 17 12" $w={17} aria-hidden="true">
                <g fill="none" stroke="#fff" strokeWidth="2">
                  <path d="M1 4.300Q8.500-2 16 4.300" />
                  <path d="M3.800 7.200Q8.500 3.200 13.200 7.200" />
                </g>
                <path d="M8.500 12L5.800 9.200Q8.500 7 11.200 9.200Z" fill="#fff" />
              </StatusSvg>
              <StatusSvg viewBox="0 0 26 12" $w={26} aria-hidden="true">
                <rect x="0.500" y="0.500" width="22" height="11" rx="3" fill="none" stroke="#fff" opacity="0.400" />
                <rect x="2" y="2" width="15.500" height="8" rx="1.500" fill="#fff" />
                <path d="M24 4q1.500 2 0 4z" fill="#fff" opacity="0.500" />
              </StatusSvg>
            </StatusGroup>
          </StatusBar>
          <Nav aria-label="Views">
            <BarButton $w={32} type="button" aria-label="Menu">
              <IconSvg viewBox="0 0 18 18" $size={17}>
                <path d="M0 2h9v2H0zM11.500 2H17v2h-5.500zM0 8h12l3 2H0zM0 14h17v2H0z" />
              </IconSvg>
            </BarButton>
            <BarButton $w={33} type="button" aria-label="Previous">
              <IconSvg viewBox="0 0 18 18" $size={18}>
                <path d="M14.500 4L9.500 9L14.500 14" fill="none" stroke="currentColor" strokeWidth="2" />
              </IconSvg>
            </BarButton>
            <Tab href="#sake10">SAKE10</Tab>
            <Tab href="#sake11">SAKE11</Tab>
            <Tab href="#sake12" $active aria-current="page">SAKE12</Tab>
            <BarButton $w={18} type="button" aria-label="Next">
              <IconSvg viewBox="0 0 18 18" $size={18}>
                <path d="M7 4L12 9L7 14" fill="none" stroke="currentColor" strokeWidth="2" />
              </IconSvg>
            </BarButton>
            <Spacer />
            <BarButton $w={28} type="button" aria-label="More">
              <IconSvg viewBox="0 0 18 18" $size={18}>
                <circle cx="9" cy="3" r="2" />
                <circle cx="9" cy="9" r="2" />
                <circle cx="9" cy="15" r="2" />
              </IconSvg>
            </BarButton>
          </Nav>
        </TopBar>
        <Heading>SOME WIDE CARDS...</Heading>
        <CardList>
          <MoonCard />
          {rows.map((row) => <EntityCard key={row.title} row={row} />)}
        </CardList>
        {logo && <Logo />}
        <HomeBar />
        <Glare />
        <Notch flip={flip} />
      </Screen>
      <Rim corners={corners} />
    </Scene>
  </ThemeProvider>
);

export default function App() {
  return (
    <>
      <GlobalStyle />
      <Stage>
        <Phone
          id="dark"
          theme={darkTheme}
          corners={leftLeaning}
          flip={false}
          rows={makeRows('20 seconden geleden', '11 seconden geleden')}
        />
        <Phone
          id="light"
          theme={lightTheme}
          corners={rightLeaning}
          flip
          rows={makeRows('29 seconden geleden', '19 seconden geleden')}
          logo
        />
      </Stage>
    </>
  );
}
